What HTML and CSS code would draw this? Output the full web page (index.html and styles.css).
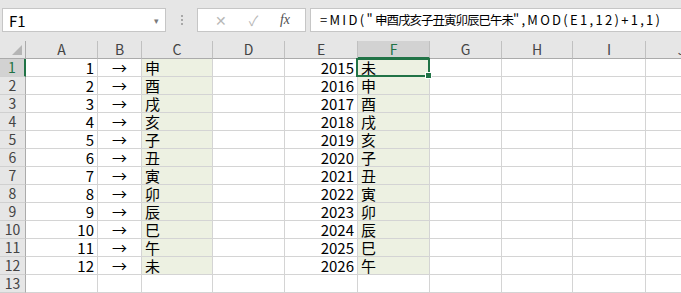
FILE: index.html
```html
<!DOCTYPE html>
<html lang="ja">
<head>
    <meta charset="utf-8" />
    <title>Excel - 干支</title>
    <link rel="stylesheet" href="styles.css">
</head>
<body>
    <div class="app">
        <!-- 名前ボックスと数式バー -->
        <div class="toolbar">
            <div class="name-box">
                <span>F1</span>
                <span class="drop">&#9662;</span>
            </div>
            <div class="grip"><i></i><i></i><i></i></div>
            <div class="fx-buttons">
                <span class="btn-x">&#10005;</span>
                <span class="btn-ok">&#10003;</span>
                <span class="btn-fx">fx</span>
            </div>
            <div class="formula"><span class="ascii">=MID("</span><span class="kanji">申酉戌亥子丑寅卯辰巳午未</span><span class="ascii">",MOD(E1,12)+1,1)</span></div>
        </div>

        <div class="sheet" id="sheet"></div>
    </div>

    <script>
        const cols = ["A", "B", "C", "D", "E", "F", "G", "H", "I", "J"];
        const eto = "申酉戌亥子丑寅卯辰巳午未";
        const sheet = document.getElementById("sheet");

        function cell(cls, text) {
            const div = document.createElement("div");
            div.className = cls;
            div.textContent = text || "";
            sheet.appendChild(div);
            return div;
        }

        // 列見出し
        cell("corner");
        cols.forEach((c) => {
            cell("col-head" + (c === "F" ? " active" : ""), c);
        });

        // 行
        for (let r = 1; r <= 13; r++) {
            cell("row-head" + (r === 1 ? " active" : ""), r);
            const has = r <= 12;
            cols.forEach((c) => {
                let cls = "cell";
                let text = "";
                if (c === "A" && has) { cls += " num"; text = r; }
                if (c === "B" && has) { cls += " mid"; text = "→"; }
                if (c === "C" && has) { cls += " fill"; text = eto[r - 1]; }
                if (c === "E" && has) { cls += " num"; text = 2014 + r; }
                if (c === "F" && has) { cls += " fill"; text = eto[(2014 + r) % 12]; }
                const div = cell(cls, text);
                if (c === "F" && r === 1) {
                    const sel = document.createElement("div");
                    sel.className = "selection";
                    sel.innerHTML = '<span class="handle"></span>';
                    div.appendChild(sel);
                }
            });
        }
    </script>
</body>
</html>
```

FILE: styles.css
```css
body {
    margin: 0;
    background: #ffffff;
    font-family: "Noto Sans CJK JP", "Noto Sans", sans-serif;
    color: #000000;
}

.app {
    width: 681px;
    height: 293px;
    overflow: hidden;
}

/* 上部のバー */
.toolbar {
    height: 41px;
    background: #e6e6e6;
    display: flex;
    align-items: flex-start;
    padding-top: 8px;
    box-sizing: border-box;
}

.name-box {
    margin-left: 2px;
    width: 164px;
    height: 24px;
    box-sizing: border-box;
    background: #ffffff;
    border: 1px solid #c6c6c6;
    display: flex;
    align-items: center;
    justify-content: space-between;
    padding: 0 6px 0 6px;
    font-size: 15px;
}

.name-box .drop {
    color: #7a7a7a;
    font-size: 9px;
}

.grip {
    width: 31px;
    height: 24px;
    display: flex;
    flex-direction: column;
    align-items: center;
    justify-content: center;
    gap: 2px;
}

.grip i {
    width: 2px;
    height: 2px;
    background: #a8a8a8;
}

.fx-buttons {
    width: 109px;
    height: 24px;
    box-sizing: border-box;
    background: #ffffff;
    border: 1px solid #c6c6c6;
    display: flex;
    align-items: center;
    justify-content: space-around;
    padding: 0 4px 0 6px;
}

.btn-x,
.btn-ok {
    color: #b8b8b8;
    font-size: 14px;
}

.btn-fx {
    font-family: "Liberation Serif", serif;
    font-style: italic;
    font-size: 14px;
    color: #505050;
}

.formula {
    flex: 1;
    margin-left: 4px;
    height: 24px;
    box-sizing: border-box;
    background: #ffffff;
    border: 1px solid #c6c6c6;
    border-right: none;
    padding-left: 9px;
    font-size: 13px;
    line-height: 22px;
    white-space: nowrap;
}

.formula .ascii {
    letter-spacing: 2.3px;
}

.formula .kanji {
    font-size: 12.5px;
    letter-spacing: -1px;
}

/* シート */
.sheet {
    display: grid;
    grid-template-columns: 26px 72px 44px 71px 72px 73px 72px 72px 71px 73px 72px;
    grid-auto-rows: 18px;
    font-size: 15px;
}

.corner,
.col-head,
.row-head,
.cell {
    box-sizing: border-box;
    border-right: 1px solid #d4d4d4;
    border-bottom: 1px solid #d4d4d4;
    line-height: 17px;
    white-space: nowrap;
}

.corner {
    background: #e6e6e6;
    border-right: 1px solid #ababab;
    border-bottom: 1px solid #ababab;
    position: relative;
}

.corner::after {
    content: "";
    position: absolute;
    right: 3px;
    bottom: 3px;
    border-left: 10px solid transparent;
    border-bottom: 10px solid #b5b5b5;
}

.col-head {
    background: #e6e6e6;
    border-right-color: #c0c0c0;
    border-bottom-color: #ababab;
    text-align: center;
    color: #444444;
    font-size: 14px;
}

.col-head.active {
    background: #d2d2d2;
    border-bottom: 2px solid #217346;
    color: #217346;
}

.row-head {
    background: #e6e6e6;
    border-right-color: #ababab;
    border-bottom-color: #d0d0d0;
    text-align: center;
    color: #444444;
    font-size: 14px;
}

.row-head.active {
    background: #d2d2d2;
    border-right: 2px solid #217346;
    color: #217346;
}

.cell {
    padding: 0 3px;
}

.cell.num {
    text-align: right;
}

.cell.mid {
    text-align: center;
}

.cell.fill {
    background: #edf1e2;
}

.cell:has(.selection) {
    position: relative;
}

.selection {
    position: absolute;
    left: -2px;
    top: -1px;
    right: -1px;
    bottom: -1px;
    border: 2px solid #217346;
}

.handle {
    position: absolute;
    right: -4px;
    bottom: -4px;
    width: 5px;
    height: 5px;
    background: #217346;
    border: 1px solid #ffffff;
}
```
